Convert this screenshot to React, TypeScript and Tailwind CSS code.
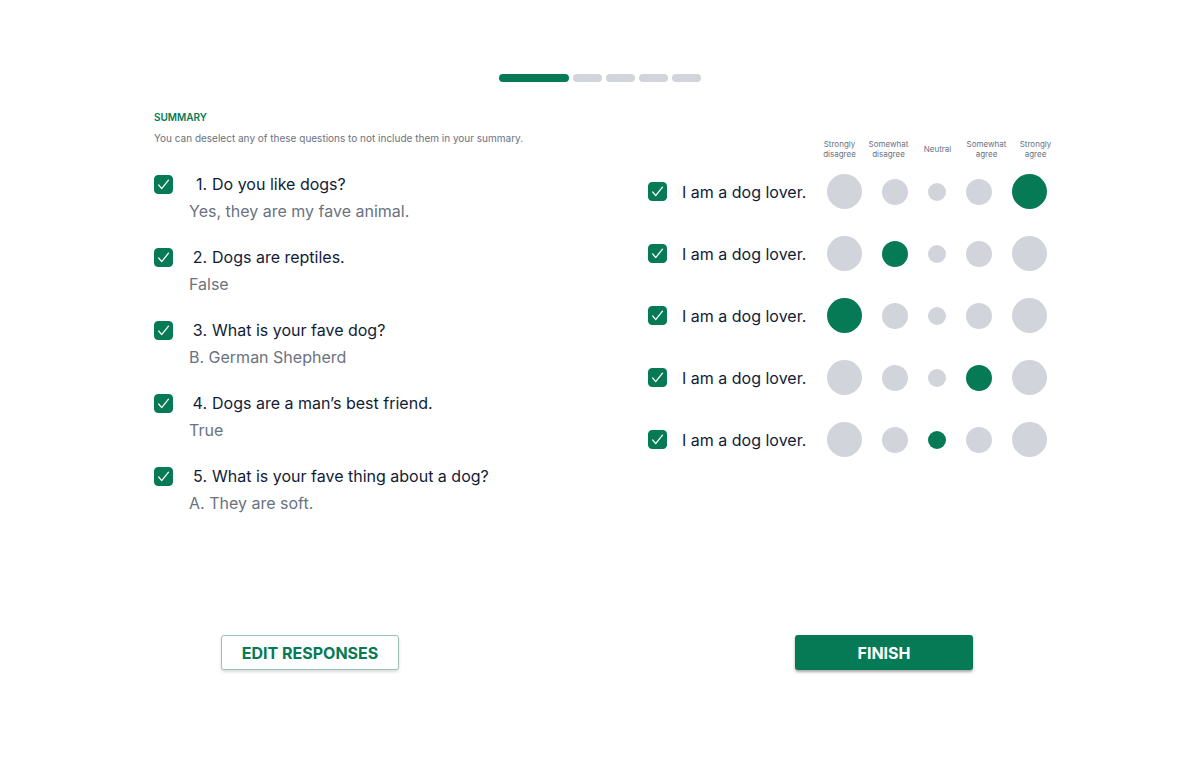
import { useState } from "react";

const questions = [
  { text: "Do you like dogs?", answer: "Yes, they are my fave animal." },
  { text: "Dogs are reptiles.", answer: "False" },
  { text: "What is your fave dog?", answer: "B. German Shepherd" },
  { text: "Dogs are a man’s best friend.", answer: "True" },
  { text: "What is your fave thing about a dog?", answer: "A. They are soft." },
];

const scale = [
  { label: "Strongly disagree", size: "size-[35px]" },
  { label: "Somewhat disagree", size: "size-[26px]" },
  { label: "Neutral", size: "size-[18px]" },
  { label: "Somewhat agree", size: "size-[26px]" },
  { label: "Strongly agree", size: "size-[35px]" },
];

const statements = [
  { text: "I am a dog lover.", value: 4 },
  { text: "I am a dog lover.", value: 1 },
  { text: "I am a dog lover.", value: 0 },
  { text: "I am a dog lover.", value: 3 },
  { text: "I am a dog lover.", value: 2 },
];

function CheckBox({ id }: { id: string }) {
  return (
    <span className="relative grid size-[19px] shrink-0">
      <input
        id={id}
        type="checkbox"
        defaultChecked
        className="peer size-[19px] appearance-none rounded border border-[#057a55] bg-white checked:bg-[#057a55]"
      />
      <svg
        viewBox="0 0 19 19"
        className="pointer-events-none absolute inset-0 hidden size-[19px] peer-checked:block"
        fill="none"
        stroke="white"
        strokeWidth="1.3"
        strokeLinecap="round"
        strokeLinejoin="round"
        aria-hidden="true"
      >
        <path d="M4.6 9.9 7.7 13.6 14.5 5.2" />
      </svg>
    </span>
  );
}

function StatementRow({ index, text, value }: { index: number; text: string; value: number }) {
  const [selected, setSelected] = useState(value);
  return (
    <li className="flex h-[35px] items-center">
      <CheckBox id={`statement-${index}`} />
      <label htmlFor={`statement-${index}`} className="ml-[15px] flex-1 text-base text-[#111c37]">
        {text}
      </label>
      <div role="radiogroup" aria-label={text} className="mr-[13px] flex items-center gap-5">
        {scale.map((option, i) => (
          <input
            key={option.label}
            type="radio"
            name={`rating-${index}`}
            aria-label={option.label}
            checked={selected === i}
            onChange={() => setSelected(i)}
            className={`${option.size} appearance-none rounded-full bg-[#d1d5db] checked:bg-[#057a55]`}
          />
        ))}
      </div>
    </li>
  );
}

export default function App() {
  return (
    <main className="min-h-screen bg-white px-8 pt-[74px] pb-12 font-['Inter',sans-serif]">
      <div className="flex justify-center gap-1" role="progressbar" aria-label="Progress" aria-valuemin={1} aria-valuemax={5} aria-valuenow={1}>
        <span className="h-2 w-[70px] rounded-full bg-[#057a55]" />
        {[2, 3, 4, 5].map((step) => (
          <span key={step} className="h-2 w-[29px] rounded-full bg-[#d1d5db]" />
        ))}
      </div>

      <div className="mx-auto max-w-[892px]">
        <div className="flex justify-between pt-7">
          <section>
            <h1 className="text-[10px] leading-[14px] font-semibold text-[#057a55]">SUMMARY</h1>
            <p className="mt-2 text-[10px] leading-3 text-[#6b7280]">
              You can deselect any of these questions to not include them in your summary.
            </p>
            <ol className="mt-[27px] flex flex-col gap-[19px]">
              {questions.map((question, i) => (
                <li key={question.text} className="flex">
                  <div className="flex h-[27px] items-center">
                    <CheckBox id={`question-${i}`} />
                  </div>
                  <div className="ml-4 text-base leading-[27px]">
                    <label htmlFor={`question-${i}`} className="flex gap-[5px] text-[#111c37]">
                      <span className="w-[18px] text-right">{i + 1}.</span>
                      <span>{question.text}</span>
                    </label>
                    <p className="text-[#6b7280]">{question.answer}</p>
                  </div>
                </li>
              ))}
            </ol>
          </section>

          <section className="-mr-3.5 w-[412px] pt-[29px]" aria-label="Statements">
            <div className="ml-auto grid w-[245px] grid-cols-5 items-center text-center text-[8px] leading-[10px] text-[#6b7280]">
              {scale.map((option) => (
                <span key={option.label}>{option.label}</span>
              ))}
            </div>
            <ul className="mt-[15px] flex flex-col gap-[27px]">
              {statements.map((statement, i) => (
                <StatementRow key={i} index={i} text={statement.text} value={statement.value} />
              ))}
            </ul>
          </section>
        </div>

        <div className="mt-[118px] flex justify-between pr-[73px] pl-[67px] text-base font-bold">
          <button type="button" className="h-[35px] w-[178px] rounded-[3px] border border-[#9bc3b4] bg-white text-[#057a55] shadow-[0_2px_3px_rgba(0,0,0,0.14)]">
            EDIT RESPONSES
          </button>
          <button type="button" className="h-[35px] w-[178px] rounded-[3px] bg-[#057a55] text-white shadow-[0_2px_3px_rgba(0,0,0,0.35)]">
            FINISH
          </button>
        </div>
      </div>
    </main>
  );
}
